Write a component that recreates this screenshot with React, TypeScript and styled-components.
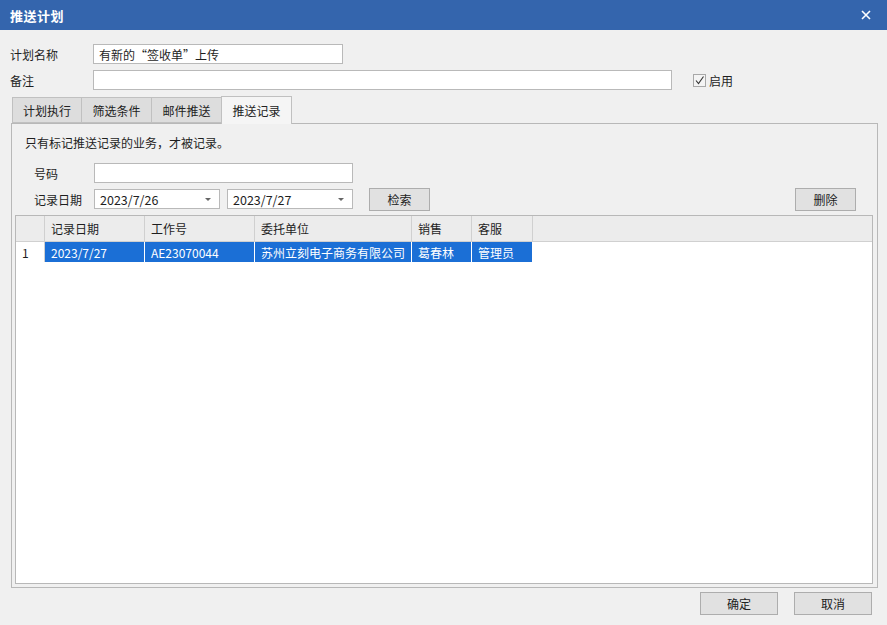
import styled, { createGlobalStyle } from "styled-components";

const GlobalStyle = createGlobalStyle`
    body {
        margin: 0;
        background: #f0f0f0;
        font-family: "Noto Sans CJK SC", "Noto Sans", sans-serif;
        font-size: 12px;
        color: #1e1e1e;
    }
`;

type Record = {
    date: string;
    jobNo: string;
    client: string;
    sales: string;
    service: string;
};

const records: Record[] = [
    {
        date: "2023/7/27",
        jobNo: "AE23070044",
        client: "苏州立刻电子商务有限公司",
        sales: "葛春林",
        service: "管理员",
    },
];

const columns = [
    { title: "记录日期", width: 100 },
    { title: "工作号", width: 110 },
    { title: "委托单位", width: 157 },
    { title: "销售", width: 60 },
    { title: "客服", width: 61 },
];

const tabs = ["计划执行", "筛选条件", "邮件推送", "推送记录"];

const App = () => {
    return (
        <Window>
            <GlobalStyle />
            <TitleBar>
                <span>推送计划</span>
                <CloseBtn>
                    <svg width="10" height="10" viewBox="0 0 10 10">
                        <path d="M1 1 L9 9 M9 1 L1 9" stroke="#fff" strokeWidth="1.6" />
                    </svg>
                </CloseBtn>
            </TitleBar>

            <Body>
                <FieldRow>
                    <Label>计划名称</Label>
                    <TextBox $width={250} defaultValue="有新的“签收单”上传" />
                </FieldRow>
                <FieldRow>
                    <Label>备注</Label>
                    <TextBox $width={579} />
                    <CheckWrap>
                        <CheckBox>
                            <svg width="11" height="11" viewBox="0 0 11 11">
                                <path d="M2 5.5 L4.5 8.5 L9.5 1.5" fill="none" stroke="#333" strokeWidth="1.1" />
                            </svg>
                        </CheckBox>
                        启用
                    </CheckWrap>
                </FieldRow>

                <TabStrip>
                    {tabs.map((t, i) => (
                        <Tab key={t} $active={i === 3}>
                            {t}
                        </Tab>
                    ))}
                </TabStrip>

                <Panel>
                    <Notice>只有标记推送记录的业务，才被记录。</Notice>

                    <FilterRow>
                        <SubLabel>号码</SubLabel>
                        <TextBox $width={259} />
                    </FilterRow>
                    <FilterRow $top={6}>
                        <SubLabel>记录日期</SubLabel>
                        <DateBox>
                            2023/7/26
                            <Arrow />
                        </DateBox>
                        <DateBox $gap={7}>
                            2023/7/27
                            <Arrow />
                        </DateBox>
                        <Button $left={16}>检索</Button>
                        <Spacer />
                        <Button $right={17}>删除</Button>
                    </FilterRow>

                    <Grid>
                        <GridHead>
                            <RowHeadCell />
                            {columns.map((c) => (
                                <HeadCell key={c.title} $width={c.width}>
                                    {c.title}
                                </HeadCell>
                            ))}
                        </GridHead>
                        {records.map((r, i) => (
                            <GridRow key={r.jobNo}>
                                <RowNum>{i + 1}</RowNum>
                                <Cell $width={100}>{r.date}</Cell>
                                <Cell $width={110}>{r.jobNo}</Cell>
                                <Cell $width={157}>{r.client}</Cell>
                                <Cell $width={60}>{r.sales}</Cell>
                                <Cell $width={61}>{r.service}</Cell>
                            </GridRow>
                        ))}
                    </Grid>
                </Panel>

                <Footer>
                    <Button $wide>确定</Button>
                    <Button $wide>取消</Button>
                </Footer>
            </Body>
        </Window>
    );
};

export default App;

const Window = styled.div`
    display: flex;
    flex-direction: column;
    width: 887px;
    height: 625px;
    overflow: hidden;
    background: #f0f0f0;
`;

const TitleBar = styled.div`
    display: flex;
    align-items: center;
    justify-content: space-between;
    height: 30px;
    padding: 0 16px 0 10px;
    background: #3465ad;
    color: #fff;
    font-size: 13px;
    font-weight: bold;
    letter-spacing: 0.5px;
`;

const CloseBtn = styled.div`
    display: flex;
    align-items: center;
`;

const Body = styled.div`
    display: flex;
    flex-direction: column;
    padding: 14px 10px 0 11px;
`;

const FieldRow = styled.div`
    display: flex;
    align-items: center;
    height: 20px;
    margin-bottom: 6px;
`;

const Label = styled.div`
    width: 83px;
    margin-left: -1px;
    font-size: 12px;
`;

const TextBox = styled.input<{ $width: number }>`
    box-sizing: border-box;
    width: ${(p) => p.$width}px;
    height: 20px;
    padding: 0 5px;
    border: 1px solid #b9b9b9;
    background: #fff;
    font-family: inherit;
    font-size: 12px;
    color: #1e1e1e;
    outline: none;
`;

const CheckWrap = styled.div`
    display: flex;
    align-items: center;
    gap: 3px;
    margin-left: 21px;
    font-size: 12px;
`;

const CheckBox = styled.div`
    display: flex;
    align-items: center;
    justify-content: center;
    box-sizing: border-box;
    width: 13px;
    height: 13px;
    border: 1px solid #a8a8a8;
    background: #f4f4f4;
`;

const TabStrip = styled.div`
    display: flex;
    align-items: flex-end;
    height: 26px;
    margin-top: 1px;
    padding-left: 1px;
`;

const Tab = styled.div<{ $active?: boolean }>`
    position: relative;
    z-index: ${(p) => (p.$active ? 2 : 1)};
    box-sizing: border-box;
    display: flex;
    align-items: center;
    justify-content: center;
    flex-shrink: 0;
    width: 71px;
    height: ${(p) => (p.$active ? 28 : 26)}px;
    margin-bottom: ${(p) => (p.$active ? -1 : 0)}px;
    padding-bottom: ${(p) => (p.$active ? 1 : 0)}px;
    margin-left: -1px;
    border: 1px solid #c0c0c0;
    border-bottom: ${(p) => (p.$active ? "none" : "1px solid #c0c0c0")};
    background: ${(p) => (p.$active ? "#f5f5f5" : "#dddddd")};
    font-size: 12px;
    color: #222;

    &:first-child {
        width: 70px;
        margin-left: 0;
    }
`;

const Panel = styled.div`
    box-sizing: border-box;
    display: flex;
    flex-direction: column;
    width: 867px;
    height: 465px;
    padding: 10px 4px 3px 3px;
    border: 1px solid #b8b8b8;
    background: #f0f0f0;
`;

const Notice = styled.div`
    height: 18px;
    padding-left: 10px;
    line-height: 18px;
`;

const FilterRow = styled.div<{ $top?: number }>`
    display: flex;
    align-items: center;
    height: 20px;
    margin-top: ${(p) => p.$top ?? 11}px;
`;

const SubLabel = styled.div`
    box-sizing: border-box;
    width: 79px;
    padding-left: 19px;
    font-size: 12px;
`;

const DateBox = styled.div<{ $gap?: number }>`
    box-sizing: border-box;
    display: flex;
    align-items: center;
    justify-content: space-between;
    width: 126px;
    height: 20px;
    margin-left: ${(p) => p.$gap ?? 0}px;
    padding: 0 8px 0 5px;
    border: 1px solid #b9b9b9;
    background: #fff;
    font-size: 12.5px;
`;

const Arrow = styled.span`
    width: 0;
    height: 0;
    border-left: 3px solid transparent;
    border-right: 3px solid transparent;
    border-top: 3px solid #666;
`;

const Spacer = styled.div`
    flex: 1;
`;

const Button = styled.div<{ $left?: number; $right?: number; $wide?: boolean }>`
    box-sizing: border-box;
    display: flex;
    align-items: center;
    justify-content: center;
    width: ${(p) => (p.$wide ? 78 : 61)}px;
    height: 23px;
    margin-left: ${(p) => p.$left ?? 0}px;
    margin-right: ${(p) => p.$right ?? 0}px;
    border: 1px solid #adadad;
    background: #e1e1e1;
    font-size: 12px;
    color: #222;
`;

const Grid = styled.div`
    flex: 1;
    margin-top: 6px;
    border: 1px solid #b8b8b8;
    background: #fff;
`;

const GridHead = styled.div`
    display: flex;
    height: 25px;
    border-bottom: 1px solid #d0d0d0;
    background: #ececec;
`;

const RowHeadCell = styled.div`
    width: 28px;
    border-right: 1px solid #d0d0d0;
`;

const HeadCell = styled.div<{ $width: number }>`
    box-sizing: border-box;
    display: flex;
    align-items: center;
    width: ${(p) => p.$width}px;
    padding-left: 6px;
    border-right: 1px solid #d0d0d0;
    font-size: 12px;
`;

const GridRow = styled.div`
    display: flex;
    height: 20px;
`;

const RowNum = styled.div`
    box-sizing: border-box;
    display: flex;
    align-items: center;
    width: 29px;
    padding-left: 6px;
    border-right: 1px solid #d0d0d0;
    background: #fff;
`;

const Cell = styled.div<{ $width: number }>`
    box-sizing: border-box;
    display: flex;
    align-items: center;
    width: ${(p) => p.$width}px;
    padding-left: 6px;
    border-right: 1px solid #fff;
    background: #1b6fd6;
    color: #fff;
    font-size: 12px;
    white-space: nowrap;
    overflow: hidden;
`;

const Footer = styled.div`
    display: flex;
    justify-content: flex-end;
    gap: 16px;
    margin-top: 4px;
    padding-right: 5px;
`;
